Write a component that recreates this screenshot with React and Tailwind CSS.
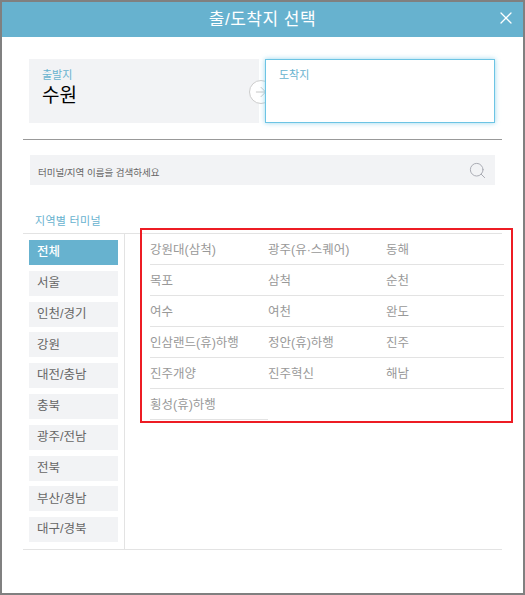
import { Search, X, ArrowRight } from 'lucide-react';

const regions = ['전체', '서울', '인천/경기', '강원', '대전/충남', '충북', '광주/전남', '전북', '부산/경남', '대구/경북'];

const terminals = [
  '강원대(삼척)', '광주(유·스퀘어)', '동해',
  '목포', '삼척', '순천',
  '여수', '여천', '완도',
  '인삼랜드(휴)하행', '정안(휴)하행', '진주',
  '진주개양', '진주혁신', '해남',
  '횡성(휴)하행',
];

export default function App() {
  return (
    <div className="relative w-[525px] h-[595px] bg-white border-2 border-[#808080] font-['Liberation_Sans','Noto_Sans_CJK_KR',sans-serif] overflow-hidden">
      <header className="relative h-[35px] bg-[#67b2cf] flex items-center justify-center">
        <h1 className="text-[17px] leading-none text-white tracking-[0.5px]">출/도착지 선택</h1>
        <button className="absolute right-[7px] top-[6px] text-white">
          <X size={20} strokeWidth={1.5} />
        </button>
      </header>

      <div className="px-[21px]">
        <div className="flex pt-[22px] px-[6px] h-[103px] border-b border-[#999999]">
          <div className="relative w-[230px] h-[64px] bg-[#f2f3f5] pl-[13px] pt-[8px] shrink-0">
            <div className="text-[11px] leading-[16px] text-[#67b2cf]">출발지</div>
            <div className="text-[19px] leading-[25px] text-black">수원</div>
            <div className="absolute left-[220px] top-[21px] w-[24px] h-[24px] rounded-full bg-white border border-[#cccccc] flex items-center justify-center text-[#aaaaaa]">
              <ArrowRight size={16} strokeWidth={1} />
            </div>
          </div>
          <div className="relative w-[230px] h-[64px] ml-[6px] bg-white border border-[#6cc4e4] shadow-[0_0_5px_rgba(108,196,228,0.7)] pl-[13px] pt-[7px] shrink-0">
            <div className="text-[11px] leading-[16px] text-[#67b2cf]">도착지</div>
          </div>
        </div>

        <div className="mt-[15px] mx-[7px] h-[30px] bg-[#f2f3f5] flex items-center justify-between pl-[8px] pr-[8px]">
          <span className="text-[9.5px] text-[#666666] mt-[6px]">터미널/지역 이름을 검색하세요</span>
          <Search size={19} strokeWidth={1.25} className="text-[#a9abb3]" />
        </div>

        <div className="h-[49px] pl-[12px] pt-[28px] text-[11px] leading-[16px] text-[#67b2cf] border-b border-[#e3e3e3] tracking-[0.3px]">
          지역별 터미널
        </div>

        <div className="flex h-[316px] border-b border-[#e3e3e3]">
          <ul className="w-[102px] shrink-0 border-r border-[#e3e3e3] pl-[6px] pt-[6px] flex flex-col gap-[5.8px]">
            {regions.map((name, i) => (
              <li
                key={name}
                className={`w-[89px] h-[25px] pl-[8px] flex items-center text-[12.5px] ${i === 0 ? 'bg-[#67b2cf] text-white font-medium' : 'bg-[#f2f3f5] text-[#666666]'}`}
              >
                {name}
              </li>
            ))}
          </ul>
          <div className="flex-1 pl-[25px] -mr-[2px]">
            <div className="grid grid-cols-3">
              {terminals.map((name) => (
                <div key={name} className="h-[31px] pt-[2px] flex items-center border-b border-[#e3e3e3] text-[12.5px] text-[#999999] whitespace-nowrap">
                  {name}
                </div>
              ))}
            </div>
          </div>
        </div>
      </div>

      {/* red annotation box drawn over the list */}
      <div className="absolute left-[138px] top-[226px] w-[373px] h-[195px] border-2 border-[#ed1c24] pointer-events-none" />
    </div>
  );
}
